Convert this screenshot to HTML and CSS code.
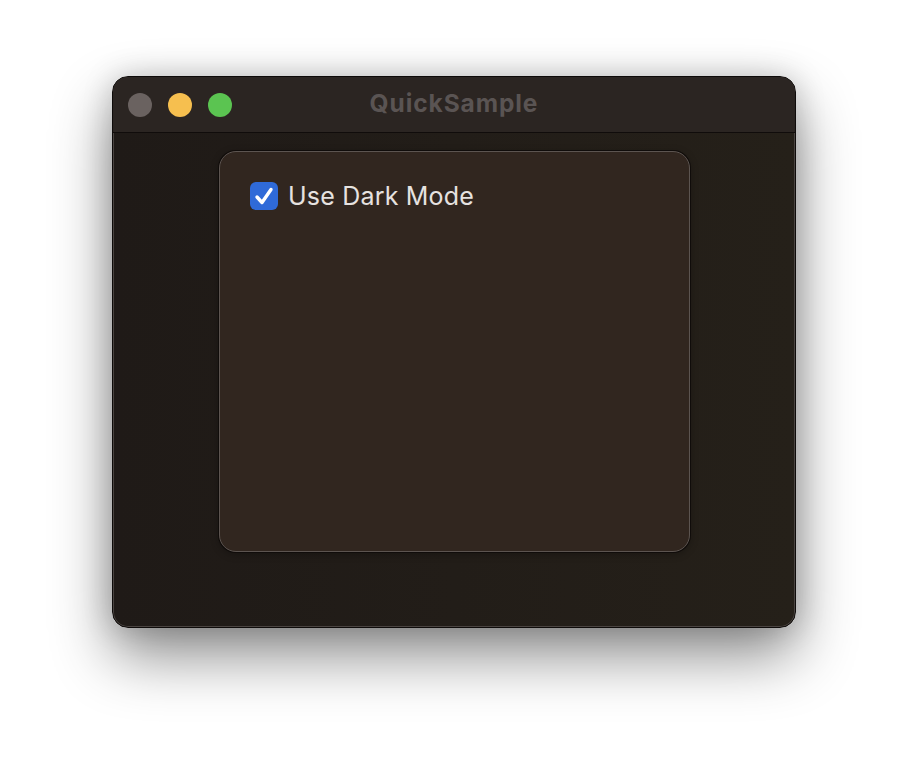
FILE: index.html
```html
<!DOCTYPE html>
<html lang="en">
<head>
    <meta charset="UTF-8">
    <title>QuickSample</title>
    <link rel="stylesheet" href="styles.css">
</head>
<body>
    <div class="window">
        <div class="titlebar">
            <div class="lights">
                <span class="light light-close"></span>
                <span class="light light-min"></span>
                <span class="light light-max"></span>
            </div>
            <div class="title">QuickSample</div>
        </div>
        <div class="content">
            <div class="panel">
                <label class="toggle">
                    <span class="box">
                        <svg width="24" height="24" viewBox="0 0 24 24">
                            <path d="M5 13 L10 18.5 L19 5.5" fill="none" stroke="#fff" stroke-width="3.4" stroke-linecap="round" stroke-linejoin="round"/>
                        </svg>
                    </span>
                    <span class="label-text">Use Dark Mode</span>
                </label>
            </div>
        </div>
    </div>
</body>
</html>
```
FILE: styles.css
```css
body {
    margin: 0;
    width: 908px;
    height: 776px;
    background: #ffffff;
    font-family: Inter, "Noto Sans", sans-serif;
    overflow: hidden;
}

.window {
    margin: 76px 0 0 112px;
    width: 684px;
    height: 552px;
    box-sizing: border-box;
    border: 1px solid #0e0b0a;
    border-radius: 16px;
    background: linear-gradient(90deg, #1f1a17, #252019);
    box-shadow: 0 0 0 1px #4a4441 inset, 0 28px 60px rgba(0, 0, 0, 0.45), 0 0 30px rgba(0, 0, 0, 0.18);
    overflow: hidden;
    display: flex;
    flex-direction: column;
}

.titlebar {
    height: 55px;
    flex: none;
    background: #2b2522;
    border-bottom: 1px solid #100c0b;
    position: relative;
    display: flex;
    align-items: center;
}

.lights {
    display: flex;
    gap: 16px;
    padding-left: 15px;
}

.light {
    width: 24px;
    height: 24px;
    border-radius: 50%;
    display: block;
}

.light-close { background: #6a6260; }
.light-min { background: #f6bf4f; }
.light-max { background: #5bc451; }

.title {
    position: absolute;
    left: 0;
    right: 0;
    top: 0;
    line-height: 53px;
    text-align: center;
    font-size: 24.5px;
    font-weight: 700;
    letter-spacing: 0.9px;
    color: #5a5453;
}

.content {
    flex: 1;
    padding: 18px 0 0 106px;
}

.panel {
    width: 471px;
    height: 401px;
    box-sizing: border-box;
    border: 1px solid #5c5450;
    border-radius: 17px;
    background: #31261f;
    box-shadow: 0 0 0 1px #100c0a, 0 2px 8px rgba(0, 0, 0, 0.3);
    padding: 29px 0 0 30px;
}

.toggle {
    display: flex;
    align-items: center;
    gap: 10px;
}

.box {
    width: 28px;
    height: 28px;
    border-radius: 6px;
    background: #2f6ad8;
    display: flex;
    align-items: center;
    justify-content: center;
}

.label-text {
    font-size: 25px;
    letter-spacing: 0.2px;
    color: #e6e2e0;
}
```
